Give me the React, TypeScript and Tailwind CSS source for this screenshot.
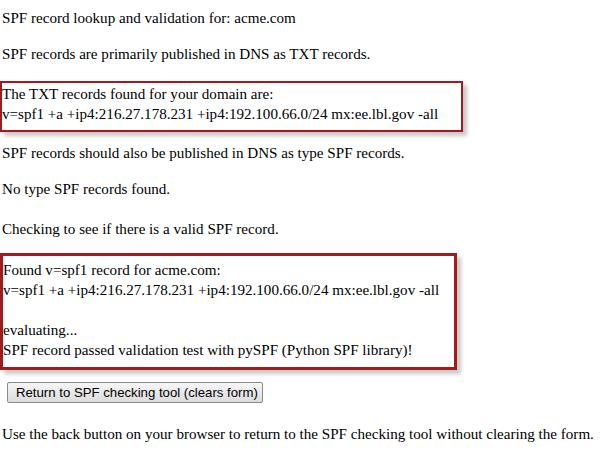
const serif = "font-['Liberation_Serif','Times_New_Roman',serif]";

export default function App() {
    return (
        <div className={`${serif} min-h-[453px] w-[604px] bg-white pt-[8px] text-[15.1px] leading-[20px] text-black`}>
            <p className="pl-[2px]">SPF record lookup and validation for: acme.com</p>
            <p className="mt-[16px] pl-[2px]">SPF records are primarily published in DNS as TXT records.</p>

            <div className="mt-[17px] w-[463px] border-2 border-[#a31a1a] pb-[6px] pt-[1px] shadow-[4px_4px_4px_rgba(0,0,0,0.22)]">
                <p>The TXT records found for your domain are:</p>
                <p>v=spf1 +a +ip4:216.27.178.231 +ip4:192.100.66.0/24 mx:ee.lbl.gov -all</p>
            </div>

            <p className="mt-[11px] pl-[2px]">SPF records should also be published in DNS as type SPF records.</p>
            <p className="mt-[16px] pl-[2px]">No type SPF records found.</p>
            <p className="mt-[20px] pl-[2px]">Checking to see if there is a valid SPF record.</p>

            <div className="mt-[14px] w-[457px] border-[3px] border-[#a31a1a] pt-[4px] pb-[7px] shadow-[4px_4px_4px_rgba(0,0,0,0.22)]">
                <p>Found v=spf1 record for acme.com:</p>
                <p>v=spf1 +a +ip4:216.27.178.231 +ip4:192.100.66.0/24 mx:ee.lbl.gov -all</p>
                <p className="h-[20px]" />
                <p>evaluating...</p>
                <p>SPF record passed validation test with pySPF (Python SPF library)!</p>
            </div>

            <div className="mt-[12px] pl-[7px]">
                <button className="h-[21px] w-[256px] whitespace-nowrap rounded-[2px] border border-[#8a8a8a] bg-gradient-to-b from-[#f6f6f6] to-[#dcdcdc] px-[8px] text-left font-['Liberation_Sans',Arial,sans-serif] text-[13.2px] leading-[19px] text-black">
                    Return to SPF checking tool (clears form)
                </button>
            </div>

            <p className="mt-[21px] whitespace-nowrap pl-[2px]">
                Use the back button on your browser to return to the SPF checking tool without clearing the form.
            </p>
        </div>
    );
}
